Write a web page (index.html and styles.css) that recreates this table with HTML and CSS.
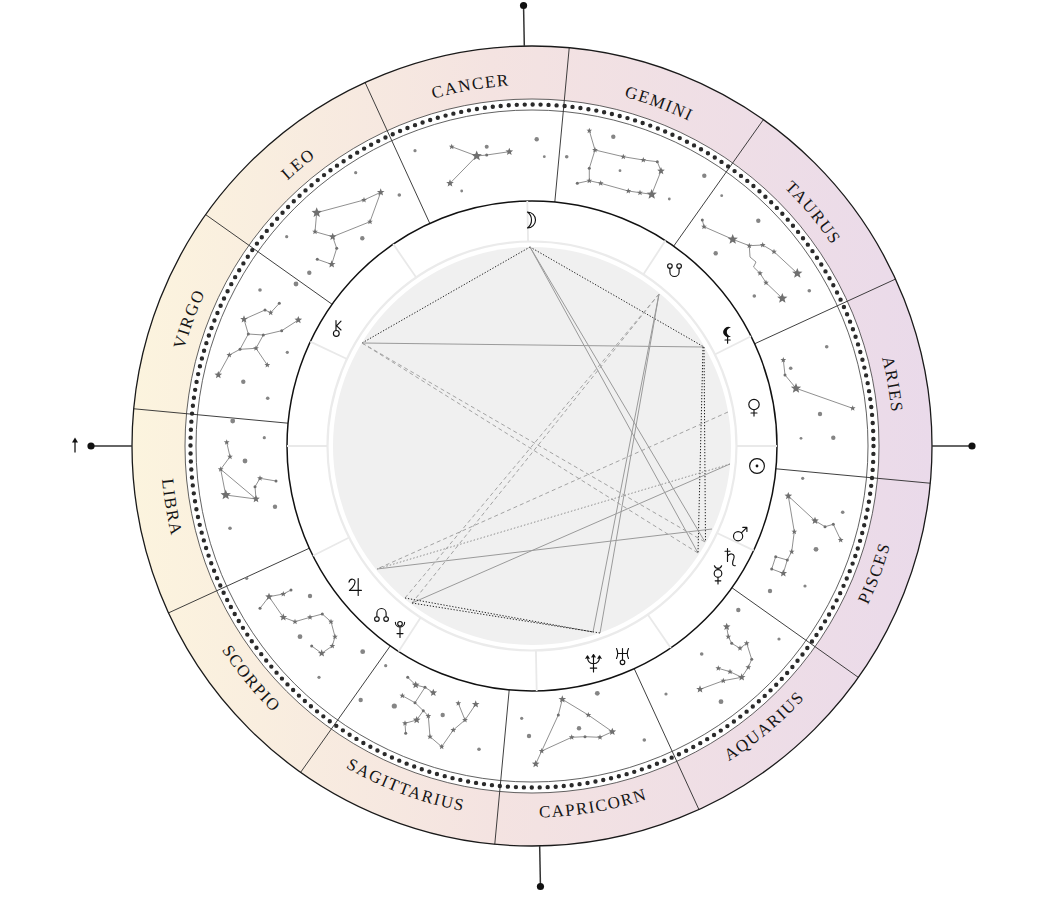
FILE: index.html
```html
<!DOCTYPE html>
<html lang="en">
<head>
<meta charset="utf-8">
<title>Natal Chart</title>
<link rel="stylesheet" href="styles.css">
</head>
<body>
<div class="chart-wrap">
<svg class="chart" width="1050" height="905" viewBox="0 0 1050 905" xmlns="http://www.w3.org/2000/svg">
  <defs>
    <linearGradient id="band" gradientUnits="userSpaceOnUse" x1="132" y1="0" x2="932" y2="0">
      <stop offset="0" stop-color="#fcf4de"/>
      <stop offset="0.45" stop-color="#f4e3e1"/>
      <stop offset="1" stop-color="#eadaea"/>
    </linearGradient>
    <path id="up" d="M408.53,106.77 A361,361 0 0 1 655.47,106.77"/>
    <path id="dn" d="M404.94,795.10 A371.5,371.5 0 0 0 659.06,795.10"/>
    <path id="sL" d="M0,-5.4 L1.38,-1.9 L5.14,-1.67 L2.23,0.73 L3.17,4.37 L0,2.35 L-3.17,4.37 L-2.23,0.73 L-5.14,-1.67 L-1.38,-1.9Z"/>
    <path id="sM" d="M0,-4 L1.03,-1.42 L3.8,-1.24 L1.66,0.54 L2.35,3.24 L0,1.75 L-2.35,3.24 L-1.66,0.54 L-3.8,-1.24 L-1.03,-1.42Z"/>
    <path id="sS" d="M0,-3 L0.76,-1.05 L2.85,-0.93 L1.24,0.4 L1.76,2.43 L0,1.3 L-1.76,2.43 L-1.24,0.4 L-2.85,-0.93 L-0.76,-1.05Z"/>
  </defs>

  <!-- sign band -->
  <circle class="band" cx="532" cy="446" r="373.5"/>

  <!-- sign boundaries -->
  <g class="bound">
    <line x1="554.80" y1="202.06" x2="569.23" y2="47.74"/>
    <line x1="429.77" y1="223.35" x2="365.09" y2="82.49"/>
    <line x1="332.14" y1="304.30" x2="205.70" y2="214.65"/>
    <line x1="288.06" y1="423.20" x2="133.74" y2="408.77"/>
    <line x1="309.35" y1="548.23" x2="168.49" y2="612.91"/>
    <line x1="390.30" y1="645.86" x2="300.65" y2="772.30"/>
    <line x1="509.20" y1="689.94" x2="494.77" y2="844.26"/>
    <line x1="634.23" y1="668.65" x2="698.91" y2="809.51"/>
    <line x1="731.86" y1="587.70" x2="858.30" y2="677.35"/>
    <line x1="775.94" y1="468.80" x2="930.26" y2="483.23"/>
    <line x1="754.65" y1="343.77" x2="895.51" y2="279.09"/>
    <line x1="673.70" y1="246.14" x2="763.35" y2="119.70"/>
  </g>

  <circle class="outer" cx="532" cy="446" r="400"/>
  <circle class="thin" cx="532" cy="446" r="347"/>
  <circle class="thin" cx="532" cy="446" r="336"/>
  <circle class="dots" cx="532" cy="446" r="341.5"/>

  <!-- inner wheel -->
  <circle class="inner" cx="532" cy="446" r="245"/>
  <circle class="ring" cx="532" cy="446" r="204.5"/>
  <circle class="core" cx="532" cy="446" r="199"/>

  <!-- house cusps -->
  <g class="cusp">
    <line x1="737" y1="446" x2="777" y2="446"/>
    <line x1="737" y1="446" x2="777" y2="446" transform="rotate(-26.6 532 446)"/>
    <line x1="737" y1="446" x2="777" y2="446" transform="rotate(-57 532 446)"/>
    <line x1="737" y1="446" x2="777" y2="446" transform="rotate(-91.1 532 446)"/>
    <line x1="737" y1="446" x2="777" y2="446" transform="rotate(-124.5 532 446)"/>
    <line x1="737" y1="446" x2="777" y2="446" transform="rotate(-154.8 532 446)"/>
    <line x1="737" y1="446" x2="777" y2="446" transform="rotate(-180 532 446)"/>
    <line x1="737" y1="446" x2="777" y2="446" transform="rotate(-206.6 532 446)"/>
    <line x1="737" y1="446" x2="777" y2="446" transform="rotate(-237 532 446)"/>
    <line x1="737" y1="446" x2="777" y2="446" transform="rotate(-271.1 532 446)"/>
    <line x1="737" y1="446" x2="777" y2="446" transform="rotate(-304.5 532 446)"/>
    <line x1="737" y1="446" x2="777" y2="446" transform="rotate(-334.8 532 446)"/>
  </g>

  <!-- aspects -->
  <g class="aspects">
    <line class="a-dot" x1="530" y1="247" x2="362" y2="343"/>
    <line class="a-dot" x1="530" y1="247" x2="704" y2="347"/>
    <line class="a-solid" x1="362" y1="343" x2="704" y2="347"/>
    <line class="a-dash" x1="362" y1="343" x2="705" y2="542"/>
    <line class="a-dash" x1="362" y1="343" x2="698" y2="553"/>
    <line class="a-solid" x1="530" y1="247" x2="705" y2="542"/>
    <line class="a-solid" x1="530" y1="247" x2="698" y2="553"/>
    <line class="a-dot" x1="704" y1="347" x2="705.5" y2="542"/>
    <line class="a-dot" x1="703" y1="347" x2="698" y2="553"/>
    <line class="a-solid" x1="659" y1="294" x2="600" y2="633"/>
    <line class="a-solid" x1="659" y1="294" x2="593" y2="632"/>
    <line class="a-dash" x1="659" y1="294" x2="405" y2="598"/>
    <line class="a-dash" x1="659" y1="294" x2="412" y2="603"/>
    <line class="a-dash" x1="728" y1="412" x2="377" y2="569"/>
    <line class="a-gdot" x1="730" y1="464" x2="377" y2="569"/>
    <line class="a-solid" x1="712" y1="529" x2="377" y2="569"/>
    <line class="a-solid" x1="730" y1="464" x2="412" y2="603"/>
    <line class="a-dot" x1="405" y1="598" x2="593" y2="632"/>
    <line class="a-dot" x1="412" y1="603" x2="600" y2="633"/>
  </g>

  <!-- planet glyphs -->
  <g class="glyph">
    <path transform="translate(531.5 220)" d="M-4,-8 A8,8 0 0 1 -4,8 A10,10 0 0 0 -4,-8 Z"/>
    <g transform="translate(674.5 270.5)">
      <circle cx="-4.6" cy="-4.5" r="2.3"/>
      <circle cx="4.6" cy="-4.5" r="2.3"/>
      <path d="M-4.6,-2.2 V1.4 A4.6,4.6 0 0 0 4.6,1.4 V-2.2"/>
    </g>
    <g transform="translate(754 407.5)">
      <circle cx="0" cy="-3" r="5.2"/>
      <path d="M0,2.2 V8.6 M-3,5.5 H3"/>
    </g>
    <g transform="translate(757 466)">
      <circle cx="0" cy="0" r="7.4"/>
    </g>
    <g transform="translate(740.5 534)">
      <circle cx="-2.4" cy="2.2" r="4.6"/>
      <path d="M0.9,-1.1 L6.4,-6.6 M2.3,-6.6 H6.4 V-2.5"/>
    </g>
    <path transform="translate(730 558)" d="M-2.5,-9.5 V3.5 M-5,-6.8 H0 M-2.5,-1.8 Q-1,-4.4 1.8,-4 Q5,-3.4 3.8,0.4 Q2.6,3 2.6,5.6 Q2.8,8.2 5.2,7.6"/>
    <g transform="translate(718 575)">
      <path d="M-3.6,-9.2 A3.8,3.8 0 0 0 3.6,-9.2"/>
      <circle cx="0" cy="-1.6" r="3.8"/>
      <path d="M0,2.2 V9 M-2.8,5.8 H2.8"/>
    </g>
    <g transform="translate(622.5 656.5)">
      <path d="M-6,-8 Q-3.6,-3 -6,2 M6,-8 Q3.6,-3 6,2 M-4.9,-3 H4.9 M0,-8 V3.4"/>
      <circle cx="0" cy="5.8" r="2.3"/>
    </g>
    <path transform="translate(593.5 663.5)" d="M-6,-6.5 Q-6,0 0,0.2 Q6,0 6,-6.5 M0,-8.5 V8.5 M-3.2,4.6 H3.2 M-7.6,-5 L-6,-7.6 L-4.4,-5 M-1.6,-6.4 L0,-9 L1.6,-6.4 M4.4,-5 L6,-7.6 L7.6,-5"/>
    <g transform="translate(381.5 614.5)">
      <circle cx="-4.6" cy="4.5" r="2.3"/>
      <circle cx="4.6" cy="4.5" r="2.3"/>
      <path d="M-4.6,2.2 V-1.4 A4.6,4.6 0 0 1 4.6,-1.4 V2.2"/>
    </g>
    <path transform="translate(355 587)" d="M-6,-4.8 Q-5.4,-8.2 -2.2,-7.8 Q1.2,-7.2 -0.6,-2.6 Q-2.4,1 -5.6,3.4 H6.4 M3.2,-8.4 V8.4"/>
    <g transform="translate(337.5 329)">
      <path d="M-1.5,-8.5 V1.3 M-1.5,-2.6 L3.5,-7.8 M-0.8,-3.2 L3.5,1"/>
      <circle cx="-1.2" cy="4.4" r="2.9"/>
    </g>
    <g transform="translate(400 629)">
      <circle cx="0" cy="-5.2" r="2.3"/>
      <path d="M-4.6,-6.6 A4.6,4.6 0 0 0 4.6,-6.6 M0,-2 V8.5 M-3,4.6 H3"/>
    </g>
    <path transform="translate(728 335)" d="M-0.4,1.2 V8.2 M-3,5 H2.2"/>
  </g>
  <g class="glyph-fill">
    <path transform="translate(728 335)" d="M3,-7.2 A5,5 0 1 0 3,1.2 A4.2,4.2 0 0 1 3,-7.2 Z"/>
    <circle cx="757" cy="466" r="1.4"/>
  </g>

  <!-- constellations -->
  <g class="const">
    <!-- Cancer -->
    <polyline class="cl" points="451.7,146.7 476.7,156 486.7,155 509.3,151.7"/>
    <polyline class="cl" points="476.7,156 450,183.3"/>
    <use href="#sS" x="451.7" y="146.7" class="st"/>
    <use href="#sL" x="476.7" y="156" class="st"/>
    <circle cx="486.7" cy="155" r="1.5" class="st"/>
    <use href="#sM" x="509.3" y="151.7" class="st"/>
    <use href="#sM" x="450" y="183.3" class="st"/>
    <circle cx="415" cy="150.7" r="1.6" class="dt"/>
    <circle cx="486.7" cy="146.7" r="2" class="dt"/>
    <circle cx="536.7" cy="139.3" r="2.2" class="dt"/>
    <circle cx="544.3" cy="156.7" r="1.4" class="dt"/>
    <circle cx="461.7" cy="191" r="1.4" class="dt"/>

    <!-- Gemini -->
    <polyline class="cl" points="589.3,130.7 595,150 623.3,156.7 643.3,160 657.3,161.7 661,171 651.7,194.3 640,192.7 628.3,191 600.7,183.3 589.3,180.7 577.3,183.3"/>
    <polyline class="cl" points="595,150 589.3,168.3 589.3,180.7"/>
    <use href="#sS" x="589.3" y="130.7" class="st"/>
    <use href="#sS" x="595" y="150" class="st"/>
    <use href="#sS" x="623.3" y="156.7" class="st"/>
    <use href="#sS" x="643.3" y="160" class="st"/>
    <circle cx="657.3" cy="161.7" r="1.5" class="st"/>
    <use href="#sM" x="661" y="171" class="st"/>
    <use href="#sL" x="651.7" y="194.3" class="st"/>
    <use href="#sS" x="640" y="192.7" class="st"/>
    <use href="#sS" x="628.3" y="191" class="st"/>
    <use href="#sS" x="600.7" y="183.3" class="st"/>
    <use href="#sS" x="589.3" y="180.7" class="st"/>
    <circle cx="577.3" cy="183.3" r="1.5" class="st"/>
    <circle cx="589.3" cy="168.3" r="1.5" class="st"/>
    <circle cx="613.3" cy="136.7" r="2.2" class="dt"/>
    <circle cx="566.7" cy="156.7" r="1.8" class="dt"/>
    <circle cx="620" cy="170.7" r="1.4" class="dt"/>
    <circle cx="704.3" cy="175.7" r="2.2" class="dt"/>
    <circle cx="669.3" cy="199" r="1.4" class="dt"/>

    <!-- Taurus -->
    <polyline class="cl" points="702.3,220 704,226.7 732.7,239.3 749.3,245.7 762.7,245 774,251.7 797.3,273.3"/>
    <polyline class="cl" points="749.3,245.7 750,257 756,262 753.5,267 760,273.3 766,282.7 782.3,298.3"/>
    <circle cx="702.3" cy="220" r="1.5" class="st"/>
    <use href="#sS" x="704" y="226.7" class="st"/>
    <use href="#sL" x="732.7" y="239.3" class="st"/>
    <use href="#sS" x="749.3" y="245.7" class="st"/>
    <use href="#sS" x="762.7" y="245" class="st"/>
    <use href="#sS" x="774" y="251.7" class="st"/>
    <use href="#sL" x="797.3" y="273.3" class="st"/>
    <use href="#sS" x="760" y="273.3" class="st"/>
    <use href="#sS" x="766" y="282.7" class="st"/>
    <use href="#sL" x="782.3" y="298.3" class="st"/>
    <circle cx="721.7" cy="195.7" r="1.4" class="dt"/>
    <circle cx="758.3" cy="220.7" r="2.2" class="dt"/>
    <circle cx="715.7" cy="253.3" r="2.2" class="dt"/>
    <circle cx="754.3" cy="296" r="1.8" class="dt"/>
    <circle cx="809.3" cy="290.7" r="1.8" class="dt"/>

    <!-- Aries -->
    <polyline class="cl" points="783.3,360 785,375 796,388.3 852.7,408.3"/>
    <use href="#sS" x="783.3" y="360" class="st"/>
    <circle cx="785" cy="375" r="1.5" class="st"/>
    <use href="#sL" x="796" y="388.3" class="st"/>
    <use href="#sS" x="852.7" y="408.3" class="st"/>
    <circle cx="790.7" cy="368.3" r="1.8" class="dt"/>
    <circle cx="826.7" cy="346.7" r="1.8" class="dt"/>
    <circle cx="820" cy="414" r="2.2" class="dt"/>
    <circle cx="801" cy="438.3" r="1.4" class="dt"/>
    <circle cx="833.3" cy="437.7" r="2.2" class="dt"/>

    <!-- Pisces -->
    <polyline class="cl" points="788.3,496 815,520.7 825,526.7 833.3,524.3 840.7,540"/>
    <polyline class="cl" points="788.3,496 794.3,531.7 791.7,551.7 787.3,560"/>
    <polygon class="cl" points="775.7,556.7 787.3,560 783.3,573.3 771.7,569"/>
    <use href="#sM" x="788.3" y="496" class="st"/>
    <use href="#sM" x="815" y="520.7" class="st"/>
    <circle cx="825" cy="526.7" r="1.5" class="st"/>
    <circle cx="833.3" cy="524.3" r="1.5" class="st"/>
    <use href="#sS" x="840.7" y="540" class="st"/>
    <use href="#sS" x="794.3" y="531.7" class="st"/>
    <use href="#sS" x="791.7" y="551.7" class="st"/>
    <circle cx="787.3" cy="560" r="1.5" class="st"/>
    <circle cx="775.7" cy="556.7" r="1.5" class="st"/>
    <use href="#sM" x="783.3" y="573.3" class="st"/>
    <circle cx="771.7" cy="569" r="1.5" class="st"/>
    <circle cx="802.7" cy="478.3" r="1.6" class="dt"/>
    <circle cx="842.7" cy="512.3" r="1.8" class="dt"/>
    <circle cx="816" cy="549.3" r="2.4" class="dt"/>
    <circle cx="805" cy="586" r="1.6" class="dt"/>
    <circle cx="770" cy="591" r="2.2" class="dt"/>

    <!-- Aquarius -->
    <polyline class="cl" points="726.7,626.7 728.3,636.7 731.7,643.3 740,648.3 746.7,643.3 751.7,659.3 748.3,667.3 741.7,677.3"/>
    <polyline class="cl" points="718.3,668.3 730,671.7 741.7,677.3 723.3,680.7 700,689.3"/>
    <use href="#sM" x="726.7" y="626.7" class="st"/>
    <use href="#sS" x="728.3" y="636.7" class="st"/>
    <circle cx="731.7" cy="643.3" r="1.5" class="st"/>
    <use href="#sS" x="740" y="648.3" class="st"/>
    <use href="#sS" x="746.7" y="643.3" class="st"/>
    <circle cx="751.7" cy="659.3" r="1.5" class="st"/>
    <use href="#sS" x="748.3" y="667.3" class="st"/>
    <use href="#sM" x="741.7" y="677.3" class="st"/>
    <use href="#sS" x="730" y="671.7" class="st"/>
    <use href="#sS" x="718.3" y="668.3" class="st"/>
    <use href="#sS" x="723.3" y="680.7" class="st"/>
    <use href="#sM" x="700" y="689.3" class="st"/>
    <circle cx="738.3" cy="610" r="2.2" class="dt"/>
    <circle cx="701.7" cy="654" r="1.8" class="dt"/>
    <circle cx="779" cy="639" r="1.6" class="dt"/>
    <circle cx="666" cy="694" r="1.6" class="dt"/>
    <circle cx="721" cy="701.7" r="2.4" class="dt"/>

    <!-- Capricorn -->
    <polyline class="cl" points="562.3,699.3 588.3,715 612.3,731.7 600,737.3 585,736.7 571.7,737.3 541.7,751 535.7,764"/>
    <polyline class="cl" points="562.3,699.3 558.3,715 541.7,751"/>
    <use href="#sM" x="562.3" y="699.3" class="st"/>
    <use href="#sS" x="588.3" y="715" class="st"/>
    <use href="#sM" x="612.3" y="731.7" class="st"/>
    <use href="#sS" x="600" y="737.3" class="st"/>
    <circle cx="585" cy="736.7" r="1.5" class="st"/>
    <use href="#sS" x="571.7" y="737.3" class="st"/>
    <use href="#sS" x="541.7" y="751" class="st"/>
    <use href="#sM" x="535.7" y="764" class="st"/>
    <circle cx="558.3" cy="715" r="1.5" class="st"/>
    <circle cx="597.3" cy="693.3" r="2.4" class="dt"/>
    <circle cx="521.7" cy="718.3" r="1.6" class="dt"/>
    <circle cx="529" cy="736" r="2.2" class="dt"/>
    <circle cx="579" cy="728.3" r="2.2" class="dt"/>
    <circle cx="644.3" cy="740" r="1.8" class="dt"/>

    <!-- Sagittarius -->
    <polyline class="cl" points="407.7,677.3 415.7,685 425,687.3 433.3,692.7"/>
    <polyline class="cl" points="425,687.3 415,702.7 402.3,695.7"/>
    <polyline class="cl" points="415,702.7 423.3,710.7 428.3,716 430,736.7 441.7,746.7 453.3,730 465,720 475.7,704.3"/>
    <polyline class="cl" points="465,720 458.3,703.3"/>
    <polyline class="cl" points="423.3,710.7 416.7,720 405,723.3 405.7,733.3"/>
    <circle cx="407.7" cy="677.3" r="1.5" class="st"/>
    <use href="#sM" x="415.7" y="685" class="st"/>
    <circle cx="425" cy="687.3" r="1.5" class="st"/>
    <use href="#sM" x="433.3" y="692.7" class="st"/>
    <use href="#sS" x="402.3" y="695.7" class="st"/>
    <circle cx="415" cy="702.7" r="1.5" class="st"/>
    <circle cx="423.3" cy="710.7" r="1.5" class="st"/>
    <use href="#sM" x="416.7" y="720" class="st"/>
    <use href="#sS" x="405" y="723.3" class="st"/>
    <circle cx="405.7" cy="733.3" r="1.5" class="st"/>
    <use href="#sS" x="428.3" y="716" class="st"/>
    <use href="#sS" x="430" y="736.7" class="st"/>
    <use href="#sS" x="441.7" y="746.7" class="st"/>
    <use href="#sS" x="453.3" y="730" class="st"/>
    <use href="#sS" x="465" y="720" class="st"/>
    <use href="#sS" x="458.3" y="703.3" class="st"/>
    <use href="#sM" x="475.7" y="704.3" class="st"/>
    <circle cx="385.7" cy="665.7" r="1.6" class="dt"/>
    <circle cx="360.7" cy="700" r="2.2" class="dt"/>
    <circle cx="394.3" cy="706" r="2.6" class="dt"/>
    <circle cx="442.7" cy="715" r="2.2" class="dt"/>
    <circle cx="479" cy="749.3" r="1.8" class="dt"/>

    <!-- Scorpio -->
    <polyline class="cl" points="260,608.3 269,596.7 283.3,594 291,590"/>
    <polyline class="cl" points="269,596.7 283.3,617.3 295,621.7 310,617.3 322.3,614 331,621.7 335,636.7 332.3,646 321.7,653.3 311.7,646"/>
    <circle cx="260" cy="608.3" r="1.5" class="st"/>
    <use href="#sM" x="269" y="596.7" class="st"/>
    <use href="#sS" x="283.3" y="594" class="st"/>
    <circle cx="291" cy="590" r="1.5" class="st"/>
    <use href="#sM" x="283.3" y="617.3" class="st"/>
    <use href="#sS" x="295" y="621.7" class="st"/>
    <use href="#sS" x="310" y="617.3" class="st"/>
    <circle cx="322.3" cy="614" r="1.5" class="st"/>
    <use href="#sS" x="331" y="621.7" class="st"/>
    <use href="#sS" x="335" y="636.7" class="st"/>
    <use href="#sS" x="332.3" y="646" class="st"/>
    <use href="#sM" x="321.7" y="653.3" class="st"/>
    <circle cx="311.7" cy="646" r="1.5" class="st"/>
    <circle cx="246.7" cy="578.3" r="1.6" class="dt"/>
    <circle cx="310" cy="596" r="2.2" class="dt"/>
    <circle cx="300" cy="636.7" r="2.4" class="dt"/>
    <circle cx="362.7" cy="651.7" r="2.4" class="dt"/>
    <circle cx="319" cy="677.3" r="1.6" class="dt"/>

    <!-- Libra -->
    <polyline class="cl" points="226.7,442.3 230,456.7 220.7,469.3 225.7,495 256,499 220.7,469.3"/>
    <polyline class="cl" points="256,499 255,486.7 260,478.3 276,481"/>
    <use href="#sS" x="226.7" y="442.3" class="st"/>
    <use href="#sS" x="230" y="456.7" class="st"/>
    <use href="#sS" x="220.7" y="469.3" class="st"/>
    <use href="#sL" x="225.7" y="495" class="st"/>
    <use href="#sM" x="256" y="499" class="st"/>
    <circle cx="255" cy="486.7" r="1.5" class="st"/>
    <use href="#sS" x="260" y="478.3" class="st"/>
    <circle cx="276" cy="481" r="1.5" class="st"/>
    <circle cx="232.7" cy="421" r="2.4" class="dt"/>
    <circle cx="264.3" cy="437.7" r="1.6" class="dt"/>
    <circle cx="245" cy="461" r="2.4" class="dt"/>
    <circle cx="275" cy="506.7" r="2.2" class="dt"/>
    <circle cx="230" cy="528.3" r="1.8" class="dt"/>

    <!-- Virgo -->
    <polyline class="cl" points="279.3,303.3 270.7,312.7 265,310 244,319.3 248.3,334 263.3,335 281.7,330.7 298.3,320"/>
    <polyline class="cl" points="248.3,334 240,349.3 229.3,355 218.3,375"/>
    <polyline class="cl" points="263.3,335 256,348.3 267.3,365"/>
    <polyline class="cl" points="240,349.3 256,348.3"/>
    <circle cx="279.3" cy="303.3" r="1.5" class="st"/>
    <use href="#sS" x="270.7" y="312.7" class="st"/>
    <circle cx="265" cy="310" r="1.5" class="st"/>
    <use href="#sM" x="244" y="319.3" class="st"/>
    <circle cx="248.3" cy="334" r="1.5" class="st"/>
    <circle cx="263.3" cy="335" r="1.5" class="st"/>
    <use href="#sS" x="256" y="348.3" class="st"/>
    <circle cx="240" cy="349.3" r="1.5" class="st"/>
    <use href="#sS" x="229.3" y="355" class="st"/>
    <use href="#sM" x="218.3" y="375" class="st"/>
    <use href="#sS" x="267.3" y="365" class="st"/>
    <circle cx="281.7" cy="330.7" r="1.5" class="st"/>
    <use href="#sM" x="298.3" y="320" class="st"/>
    <circle cx="260" cy="290" r="1.8" class="dt"/>
    <circle cx="296" cy="284" r="2.4" class="dt"/>
    <circle cx="287.3" cy="352.3" r="1.6" class="dt"/>
    <circle cx="243.3" cy="381.7" r="2.2" class="dt"/>
    <circle cx="267.7" cy="398.3" r="1.8" class="dt"/>

    <!-- Leo -->
    <polyline class="cl" points="316.7,212.7 364,200 380.7,192.3 370,221.7 332.7,236.7 315,231.7 316.7,212.7"/>
    <polyline class="cl" points="332.7,236.7 336.7,248.3 331.7,264.3 317.3,259.3"/>
    <use href="#sL" x="316.7" y="212.7" class="st"/>
    <use href="#sS" x="364" y="200" class="st"/>
    <use href="#sM" x="380.7" y="192.3" class="st"/>
    <use href="#sS" x="370" y="221.7" class="st"/>
    <use href="#sM" x="332.7" y="236.7" class="st"/>
    <use href="#sS" x="315" y="231.7" class="st"/>
    <circle cx="336.7" cy="248.3" r="1.5" class="st"/>
    <use href="#sM" x="331.7" y="264.3" class="st"/>
    <circle cx="317.3" cy="259.3" r="1.5" class="st"/>
    <circle cx="355.7" cy="172.7" r="1.6" class="dt"/>
    <circle cx="399.3" cy="195" r="1.8" class="dt"/>
    <circle cx="286.7" cy="236.7" r="1.6" class="dt"/>
    <circle cx="362.3" cy="238.3" r="2.2" class="dt"/>
    <circle cx="309.3" cy="272.7" r="2.2" class="dt"/>
  </g>

  <!-- sign labels -->
  <g class="signs">
    <g transform="rotate(80.34 532 446)"><text><textPath href="#up" startOffset="50%">ARIES</textPath></text></g>
    <g transform="rotate(50.34 532 446)"><text><textPath href="#up" startOffset="50%">TAURUS</textPath></text></g>
    <g transform="rotate(20.34 532 446)"><text><textPath href="#up" startOffset="50%">GEMINI</textPath></text></g>
    <g transform="rotate(-9.66 532 446)"><text><textPath href="#up" startOffset="50%">CANCER</textPath></text></g>
    <g transform="rotate(-39.66 532 446)"><text><textPath href="#up" startOffset="50%">LEO</textPath></text></g>
    <g transform="rotate(-69.66 532 446)"><text><textPath href="#up" startOffset="50%">VIRGO</textPath></text></g>
    <g transform="rotate(80.34 532 446)"><text><textPath href="#dn" startOffset="50%">LIBRA</textPath></text></g>
    <g transform="rotate(50.34 532 446)"><text><textPath href="#dn" startOffset="50%">SCORPIO</textPath></text></g>
    <g transform="rotate(20.34 532 446)"><text><textPath href="#dn" startOffset="50%">SAGITTARIUS</textPath></text></g>
    <g transform="rotate(-9.66 532 446)"><text><textPath href="#dn" startOffset="50%">CAPRICORN</textPath></text></g>
    <g transform="rotate(-39.66 532 446)"><text><textPath href="#dn" startOffset="50%">AQUARIUS</textPath></text></g>
    <g transform="rotate(-69.66 532 446)"><text><textPath href="#dn" startOffset="50%">PISCES</textPath></text></g>
  </g>

  <!-- axes -->
  <g class="axis">
    <line x1="524.32" y1="46.07" x2="523.55" y2="5.5"/>
    <line x1="539.68" y1="845.93" x2="540.45" y2="886.5"/>
    <line x1="132" y1="446" x2="91" y2="446"/>
    <line x1="932" y1="446" x2="972" y2="446"/>
    <line x1="75" y1="452.5" x2="75" y2="441"/>
  </g>
  <g class="axis-dot">
    <circle cx="523.55" cy="5.5" r="3.6"/>
    <circle cx="540.45" cy="886.5" r="3.6"/>
    <circle cx="91" cy="446" r="3.6"/>
    <circle cx="972" cy="446" r="3.6"/>
    <path d="M72,442.5 L75,437.5 L78,442.5 Z"/>
  </g>
</svg>
</div>
</body>
</html>
```

FILE: styles.css
```css
html, body {
  margin: 0;
  padding: 0;
  background: #ffffff;
}

.chart-wrap {
  width: 1050px;
  height: 905px;
  overflow: hidden;
}

.chart {
  display: block;
}

.band {
  fill: none;
  stroke: url(#band);
  stroke-width: 53;
}

.bound line {
  stroke: #2a2a2a;
  stroke-width: 0.9;
}

.outer {
  fill: none;
  stroke: #1a1a1a;
  stroke-width: 1.3;
}

.thin {
  fill: none;
  stroke: #3a3a3a;
  stroke-width: 0.8;
}

.dots {
  fill: none;
  stroke: #2a2a2a;
  stroke-width: 4.4;
  stroke-linecap: round;
  stroke-dasharray: 0 8.0064;
}

.inner {
  fill: #ffffff;
  stroke: #111111;
  stroke-width: 1.5;
}

.ring {
  fill: #ffffff;
  stroke: #ebebeb;
  stroke-width: 2.2;
}

.core {
  fill: #f0f0f0;
}

.cusp line {
  stroke: #e9e9e9;
  stroke-width: 1.8;
}

.aspects line {
  stroke-width: 1;
  fill: none;
}

.a-solid {
  stroke: #9a9a9a;
}

.a-dash {
  stroke: #a3a3a3;
  stroke-dasharray: 4 3;
}

.a-dot {
  stroke: #222222;
  stroke-dasharray: 1.3 1.7;
}

.a-gdot {
  stroke: #8f8f8f;
  stroke-dasharray: 1.5 2;
}

.glyph,
.glyph path,
.glyph circle {
  fill: none;
  stroke: #111111;
  stroke-width: 1.15;
  stroke-linecap: round;
  stroke-linejoin: round;
}

.glyph-fill,
.glyph-fill path,
.glyph-fill circle {
  fill: #111111;
  stroke: none;
}

.cl {
  fill: none;
  stroke: #8a8a8a;
  stroke-width: 0.95;
}

.st {
  fill: #6f6f6f;
}

.dt {
  fill: #858585;
}

.signs text {
  font-family: "Liberation Serif", "Times New Roman", serif;
  font-size: 17px;
  letter-spacing: 1.5px;
  fill: #151515;
  text-anchor: middle;
}

.axis line {
  stroke: #333333;
  stroke-width: 1.5;
}

.axis-dot {
  fill: #111111;
}
```
